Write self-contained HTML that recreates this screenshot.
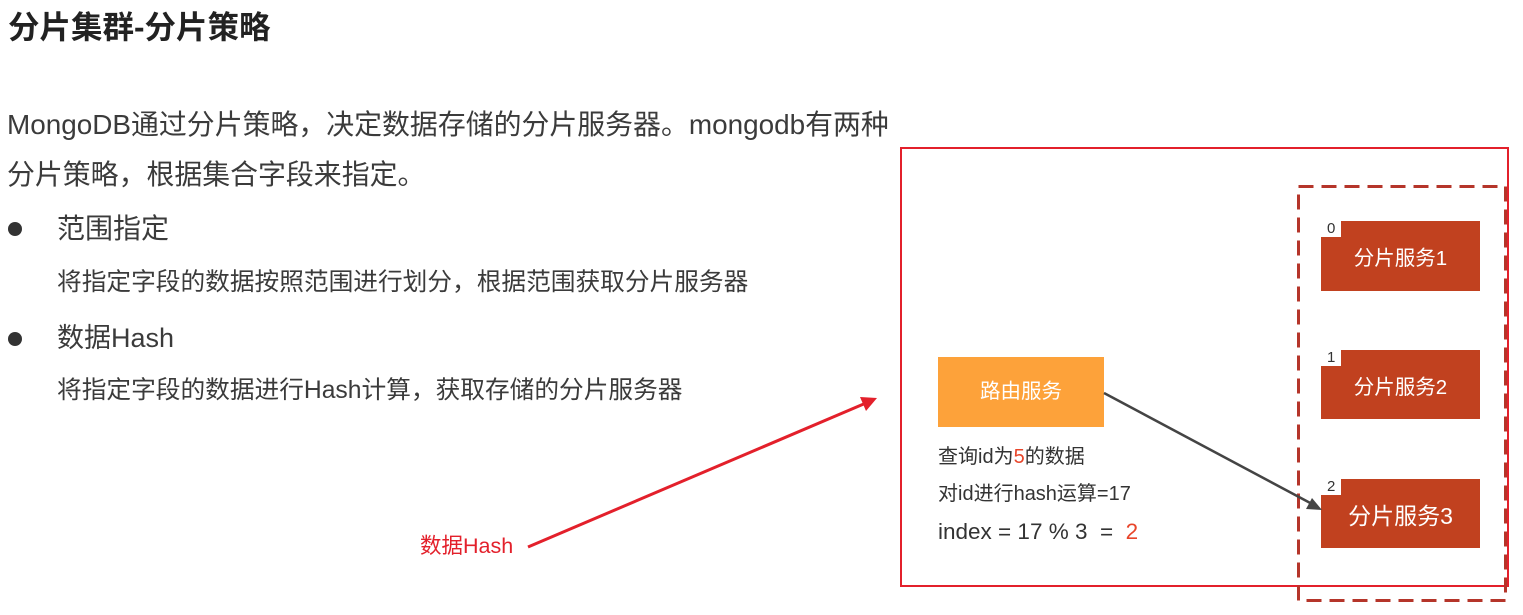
<!DOCTYPE html>
<html><head><meta charset="utf-8"><style>
body{margin:0;width:1523px;height:615px;background:#fff;position:relative;overflow:hidden;font-family:"Liberation Sans","Noto Sans CJK SC",sans-serif;color:#3b3b3b}
.a{position:absolute;white-space:nowrap;line-height:1}
.sh{position:absolute;left:1321px;width:159px;height:69px;background:#c1411f;color:#fff;font-size:20.5px;display:flex;align-items:center;justify-content:center}
.nt{position:absolute;left:0;top:0;height:16px;background:#fff;color:#333;font-size:15px;line-height:16px;text-align:left;padding-left:6px;box-sizing:border-box;width:20px}
</style></head><body>
<div class="a" style="left:8px;top:12px;font-size:31.5px;font-weight:bold;color:#222">分片集群-分片策略</div>
<div class="a" style="left:7px;top:111px;font-size:27.9px">MongoDB通过分片策略，决定数据存储的分片服务器。mongodb有两种</div>
<div class="a" style="left:7px;top:161px;font-size:27.9px">分片策略，根据集合字段来指定。</div>
<div class="a" style="left:8px;top:222px;width:14px;height:14px;border-radius:50%;background:#333"></div>
<div class="a" style="left:57px;top:215px;font-size:28px">范围指定</div>
<div class="a" style="left:57px;top:271px;font-size:24.7px">将指定字段的数据按照范围进行划分，根据范围获取分片服务器</div>
<div class="a" style="left:8px;top:332px;width:14px;height:14px;border-radius:50%;background:#333"></div>
<div class="a" style="left:57px;top:325px;font-size:27px">数据Hash</div>
<div class="a" style="left:57px;top:379px;font-size:24.7px">将指定字段的数据进行Hash计算，获取存储的分片服务器</div>

<div class="a" style="left:900px;top:147px;width:609px;height:440px;border:2px solid #e3202b;box-sizing:border-box"></div>
<svg class="a" style="left:0;top:0" width="1523" height="615">
<rect x="1298.5" y="186.5" width="207" height="414" fill="none" stroke="#b5352a" stroke-width="3" stroke-dasharray="15 8"/>
</svg>
<div class="sh" style="top:221px;height:70px">分片服务1<div class="nt">0</div></div>
<div class="sh" style="top:350px">分片服务2<div class="nt">1</div></div>
<div class="sh" style="top:479px;font-size:23px">分片服务3<div class="nt">2</div></div>
<div class="a" style="left:938px;top:357px;width:166px;height:70px;background:#fda23a;color:#fff;font-size:20.5px;display:flex;align-items:center;justify-content:center">路由服务</div>
<div class="a" style="left:938px;top:447px;font-size:20px;color:#333">查询id为<span style="color:#e8452a">5</span>的数据</div>
<div class="a" style="left:938px;top:484px;font-size:20px;color:#333">对id进行hash运算=17</div>
<div class="a" style="left:938px;top:521px;font-size:22.5px;color:#333">index = 17 % 3 &nbsp;= &nbsp;<span style="color:#e8452a">2</span></div>
<svg class="a" style="left:0;top:0" width="1523" height="615">
<line x1="1104" y1="393" x2="1314" y2="505" stroke="#444" stroke-width="2.5"/>
<polygon points="1322,510 1306,509 1312,498" fill="#444"/>
<line x1="528" y1="547" x2="866" y2="403" stroke="#e3202b" stroke-width="3"/>
<polygon points="877,398 860,397 866,411" fill="#e3202b"/>
</svg>
<div class="a" style="left:420px;top:536px;font-size:21.5px;color:#e3202b;text-shadow:0 0 2px #fff,0 0 2px #fff">数据Hash</div>
</body></html>
